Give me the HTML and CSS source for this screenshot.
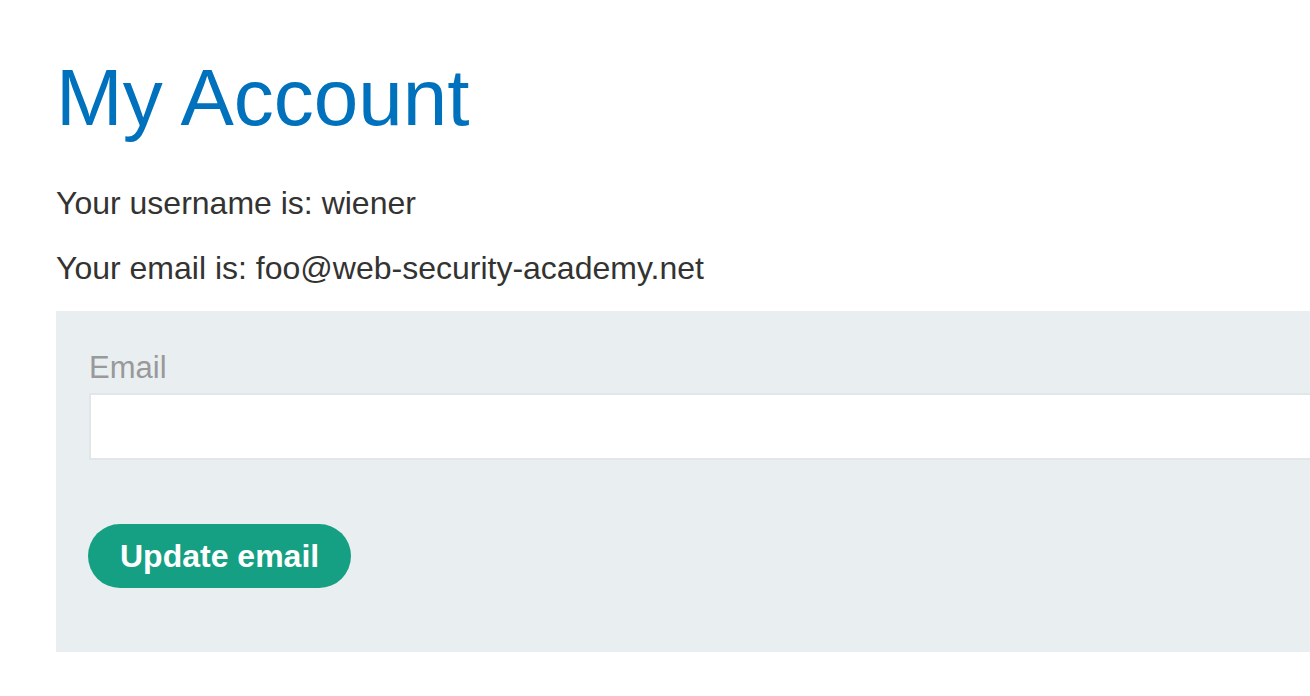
FILE: index.html
```html
<!DOCTYPE html>
<html lang="en">
<head>
<meta charset="utf-8">
<title>My Account</title>
<link rel="stylesheet" href="styles.css">
</head>
<body>
<main class="page">
  <h1 class="title">My Account</h1>
  <p class="info info-first">Your username is: wiener</p>
  <p class="info">Your email is: foo@web-security-academy.net</p>
  <form class="email-form">
    <label class="field-label" for="email">Email</label>
    <input class="field-input" id="email" type="email" name="email">
    <button class="btn" type="button">Update email</button>
  </form>
</main>
</body>
</html>
```
FILE: styles.css
```css
html, body {
  margin: 0;
  padding: 0;
  background: #ffffff;
}

body {
  font-family: "Liberation Sans", Arial, sans-serif;
  color: #333332;
  overflow: hidden;
}

.page {
  padding: 52px 0 0 56px;
}

.title {
  margin: 0;
  font-size: 80px;
  line-height: 92px;
  font-weight: normal;
  color: #0071bc;
}

.info {
  margin: 29px 0 0;
  font-size: 32px;
  line-height: 36px;
}

.info-first {
  margin-top: 41px;
}

.email-form {
  margin-top: 25px;
  background: #e9eef1;
  padding: 40px 0 64px 33px;
  display: flex;
  flex-direction: column;
  align-items: flex-start;
}

.field-label {
  font-size: 31px;
  line-height: 34px;
  color: #999999;
}

.field-input {
  margin-top: 8px;
  box-sizing: border-box;
  width: calc(100% + 40px);
  height: 67px;
  border: 2px solid #e3e6e8;
  border-right: none;
  background: #ffffff;
  font-family: inherit;
  font-size: 30px;
  padding: 0 12px;
  outline: none;
}

.btn {
  margin-top: 64px;
  margin-left: -1px;
  height: 64px;
  padding: 0 32px;
  border: none;
  border-radius: 32px;
  background: #16a083;
  color: #ffffff;
  font-family: inherit;
  font-size: 32px;
  font-weight: bold;
  cursor: pointer;
}
```
